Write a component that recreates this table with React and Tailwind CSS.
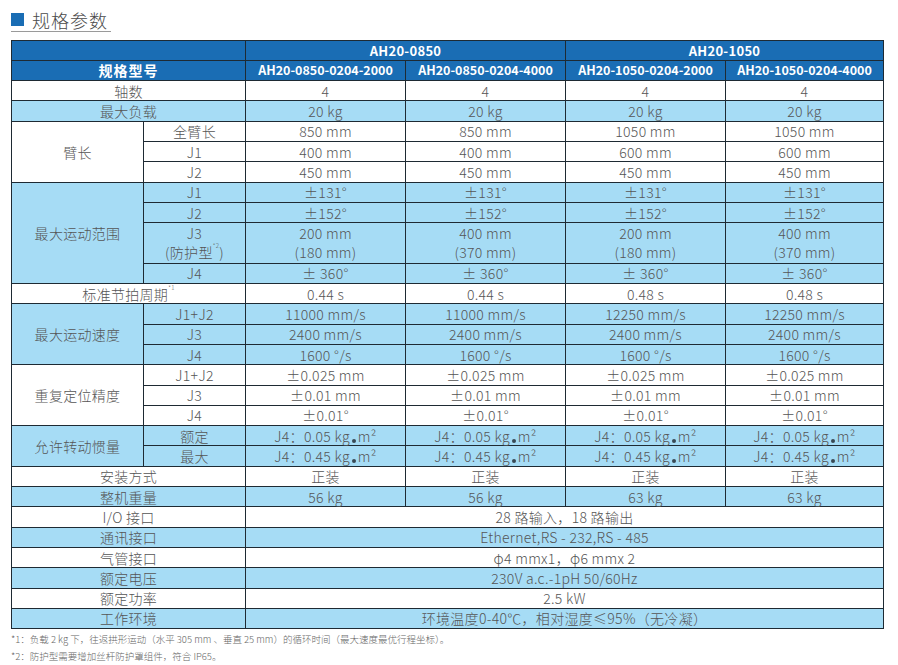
import React from "react"

const WHITE = "bg-white"
const BLUE = "bg-[#a6dcf5]"

const groups = [
  { label: "轴数", bg: WHITE, vals: ["4", "4", "4", "4"] },
  { label: "最大负载", bg: BLUE, vals: ["20 kg", "20 kg", "20 kg", "20 kg"] },
  {
    label: "臂长",
    bg: WHITE,
    sub: [
      ["全臂长", ["850 mm", "850 mm", "1050 mm", "1050 mm"]],
      ["J1", ["400 mm", "400 mm", "600 mm", "600 mm"]],
      ["J2", ["450 mm", "450 mm", "450 mm", "450 mm"]],
    ],
  },
  {
    label: "最大运动范围",
    bg: BLUE,
    sub: [
      ["J1", ["±131°", "±131°", "±131°", "±131°"]],
      ["J2", ["±152°", "±152°", "±152°", "±152°"]],
      [
        "J3",
        [
          ["200 mm", "(180 mm)"],
          ["400 mm", "(370 mm)"],
          ["200 mm", "(180 mm)"],
          ["400 mm", "(370 mm)"],
        ],
        true,
      ],
      ["J4", ["± 360°", "± 360°", "± 360°", "± 360°"]],
    ],
  },
  { label: "标准节拍周期", sup: "*1", bg: WHITE, vals: ["0.44 s", "0.44 s", "0.48 s", "0.48 s"] },
  {
    label: "最大运动速度",
    bg: BLUE,
    sub: [
      ["J1+J2", ["11000 mm/s", "11000 mm/s", "12250 mm/s", "12250 mm/s"]],
      ["J3", ["2400 mm/s", "2400 mm/s", "2400 mm/s", "2400 mm/s"]],
      ["J4", ["1600 °/s", "1600 °/s", "1600 °/s", "1600 °/s"]],
    ],
  },
  {
    label: "重复定位精度",
    bg: WHITE,
    sub: [
      ["J1+J2", ["±0.025 mm", "±0.025 mm", "±0.025 mm", "±0.025 mm"]],
      ["J3", ["±0.01 mm", "±0.01 mm", "±0.01 mm", "±0.01 mm"]],
      ["J4", ["±0.01°", "±0.01°", "±0.01°", "±0.01°"]],
    ],
  },
  {
    label: "允许转动惯量",
    bg: BLUE,
    sub: [
      ["额定", ["0.05", "0.05", "0.05", "0.05"], false, true],
      ["最大", ["0.45", "0.45", "0.45", "0.45"], false, true],
    ],
  },
  { label: "安装方式", bg: WHITE, vals: ["正装", "正装", "正装", "正装"] },
  { label: "整机重量", bg: BLUE, vals: ["56 kg", "56 kg", "63 kg", "63 kg"] },
  { label: "I/O 接口", bg: WHITE, wide: "28 路输入，18 路输出" },
  { label: "通讯接口", bg: BLUE, wide: "Ethernet,RS - 232,RS - 485" },
  { label: "气管接口", bg: WHITE, wide: "φ4 mmx1，φ6 mmx 2" },
  { label: "额定电压", bg: BLUE, wide: "230V a.c.-1pH 50/60Hz" },
  { label: "额定功率", bg: WHITE, wide: "2.5 kW" },
  { label: "工作环境", bg: BLUE, wide: "环境温度0-40℃，相对湿度≤95%（无冷凝）" },
]

const cell = "border border-[#1e2a33] text-center align-middle p-0 leading-none"

function Inertia({ v }) {
  return (
    <span>
      J4：{v} kg
      <span className="inline-block relative top-[1px] mx-[2px] w-[4px] h-[4px] rounded-full bg-[#3a4a55]" />
      m²
    </span>
  )
}

function Value({ v, inertia }) {
  if (inertia) return <Inertia v={v} />
  if (Array.isArray(v))
    return (
      <div className="flex flex-col gap-[5px]">
        <span>{v[0]}</span>
        <span>{v[1]}</span>
      </div>
    )
  return v
}

function Rows() {
  const out = []
  groups.forEach((g, gi) => {
    if (g.sub) {
      g.sub.forEach(([name, vals, tall, inertia], i) => {
        out.push(
          <tr key={gi + "-" + i} className={`${g.bg} ${tall ? "h-[40.6px]" : "h-[20.3px]"}`}>
            {i === 0 && (
              <td rowSpan={g.sub.length} className={cell}>
                {g.label}
              </td>
            )}
            <td className={cell}>
              {tall ? (
                <div className="flex flex-col gap-[5px]">
                  <span>J3</span>
                  <span>
                    (防护型<sup className="text-[6px] align-[7px]">*2</sup>)
                  </span>
                </div>
              ) : (
                name
              )}
            </td>
            {vals.map((v, k) => (
              <td key={k} className={cell}>
                <Value v={v} inertia={inertia} />
              </td>
            ))}
          </tr>
        )
      })
    } else {
      out.push(
        <tr key={gi} className={`${g.bg} h-[20.3px]`}>
          <td colSpan={2} className={cell}>
            {g.label}
            {g.sup && <sup className="text-[6px] align-[7px]">{g.sup}</sup>}
          </td>
          {g.wide ? (
            <td colSpan={4} className={cell}>
              {g.wide}
            </td>
          ) : (
            g.vals.map((v, k) => (
              <td key={k} className={cell}>
                {v}
              </td>
            ))
          )}
        </tr>
      )
    }
  })
  return out
}

export default function App() {
  return (
    <div
      className="w-[898px] h-[665px] bg-white text-[#555] overflow-hidden font-light"
      style={{ fontFamily: '"Noto Sans CJK SC", "Noto Sans", sans-serif' }}
    >
      <div className="pl-[11px] pt-[7px]">
        <div className="inline-flex items-center gap-[8px] border-b border-[#9a9a9a] pb-[2px] pr-[3px]">
          <span className="w-[13px] h-[13px] bg-[#1a6db4]" />
          <span className="text-[18px] leading-none text-[#4a4a4a] tracking-[1px]">规格参数</span>
        </div>
      </div>

      <table className="ml-[11px] mt-[8px] w-[872px] border-collapse table-fixed text-[14px] tracking-[0.3px]">
        <colgroup>
          <col className="w-[132px]" />
          <col className="w-[102px]" />
          <col className="w-[160px]" />
          <col className="w-[160px]" />
          <col className="w-[160px]" />
          <col className="w-[158px]" />
        </colgroup>
        <tbody>
          <tr className="bg-[#1a6db4] text-white font-bold h-[20.3px] text-[13px]">
            <td colSpan={2} className={cell}></td>
            <td colSpan={2} className={cell}>
              AH20-0850
            </td>
            <td colSpan={2} className={cell}>
              AH20-1050
            </td>
          </tr>
          <tr className="bg-[#1a6db4] text-white font-bold h-[20.3px] text-[12.5px] tracking-normal">
            <td colSpan={2} className={`${cell} text-[14px] tracking-[1px]`}>
              规格型号
            </td>
            <td className={cell}>AH20-0850-0204-2000</td>
            <td className={cell}>AH20-0850-0204-4000</td>
            <td className={cell}>AH20-1050-0204-2000</td>
            <td className={cell}>AH20-1050-0204-4000</td>
          </tr>
          <Rows />
        </tbody>
      </table>

      <div className="pl-[11px] pt-[2px] text-[9.5px] leading-[17px] text-[#666]">
        <p>*1：负载 2 kg 下，往返拱形运动（水平 305 mm 、垂直 25 mm）的循环时间（最大速度最优行程坐标）。</p>
        <p>*2：防护型需要增加丝杆防护罩组件，符合 IP65。</p>
      </div>
    </div>
  )
}
